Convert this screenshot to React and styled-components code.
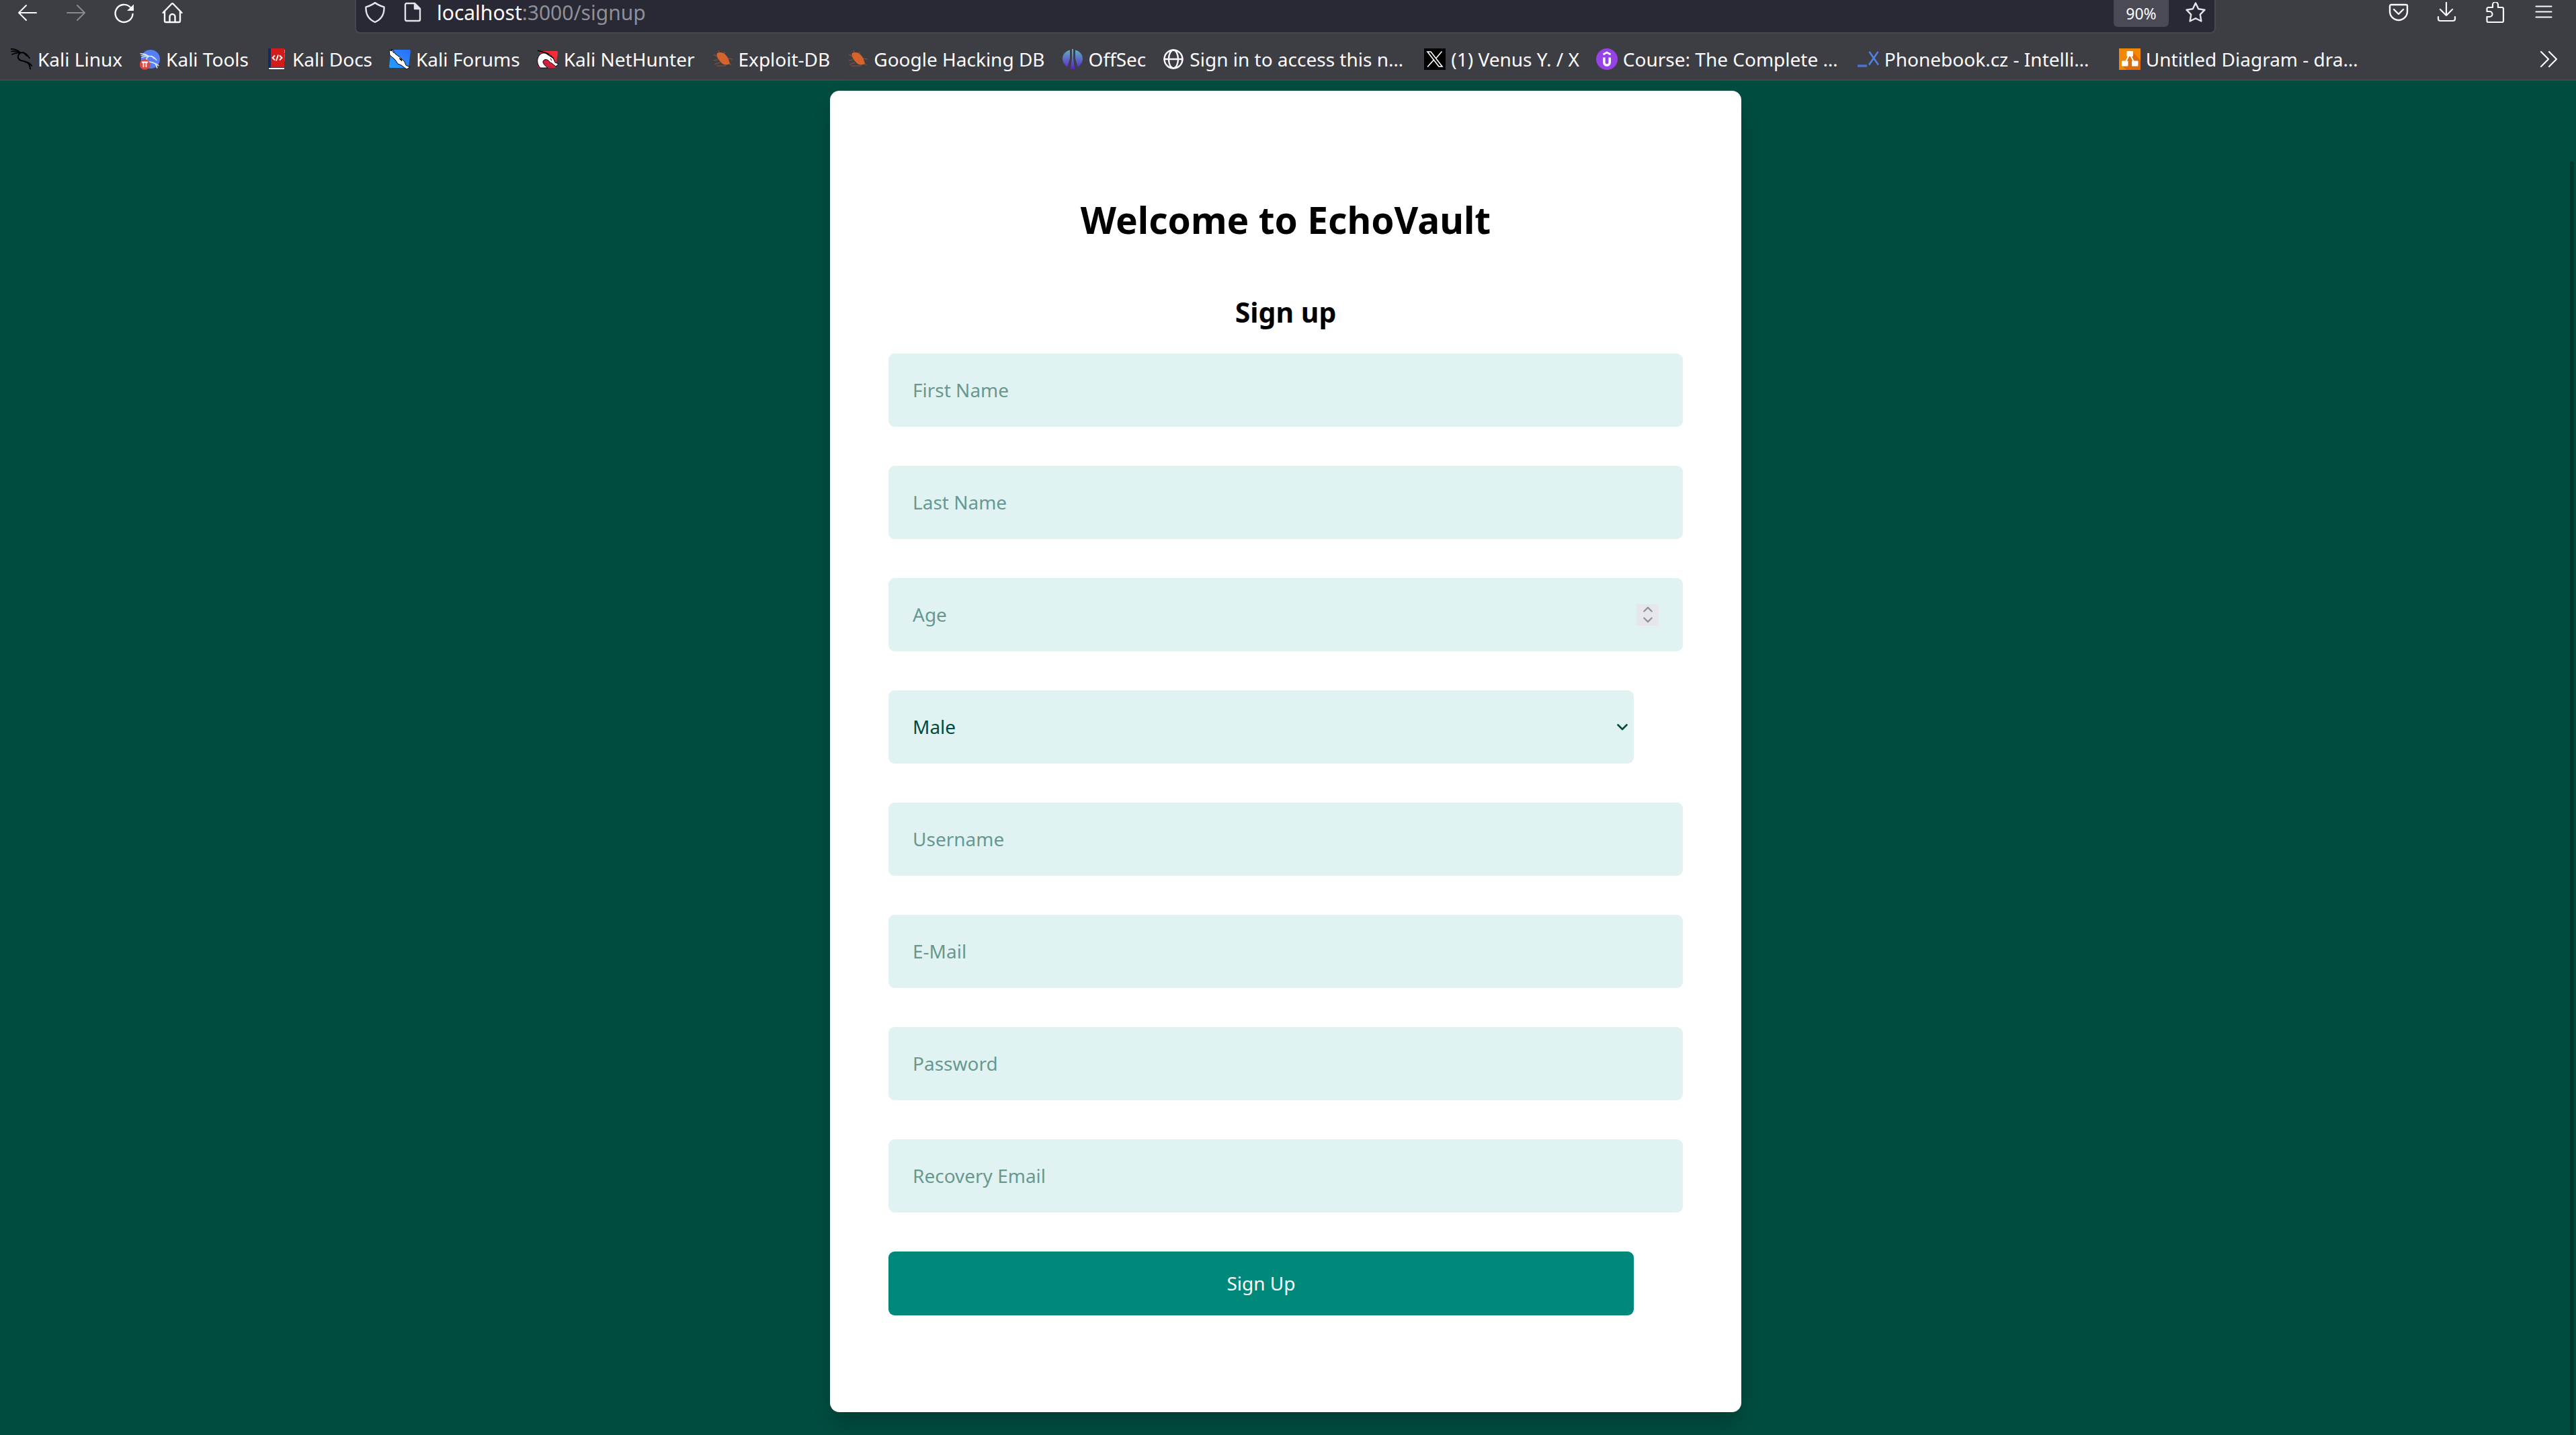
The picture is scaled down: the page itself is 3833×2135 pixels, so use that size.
import React, { useState } from "react";
import styled, { createGlobalStyle } from "styled-components";

const GlobalStyle = createGlobalStyle`
  *, *::before, *::after { box-sizing: border-box; }
  html, body { margin: 0; background: #004d40; }
  body, button, input, select { font-family: "Noto Sans", "Open Sans", sans-serif; }
  button, input, select { margin: 0; padding: 0; border: 0; background: none; color: inherit; }
  svg { display: block; }
`;

const Shell = styled.div`
  display: flex;
  flex-direction: column;
  min-height: 100vh;
`;

const Chrome = styled.header`
  background: #3d3e43;
  color: #fbfbfe;
`;

const NavBar = styled.nav`
  display: flex;
  align-items: flex-start;
  padding: 0 32px 0 24px;
`;

const ToolGroup = styled.div`
  display: flex;
  align-items: center;
  gap: 40px;
  height: 38px;
`;

const ToolButton = styled.button`
  display: block;
  width: 32px;
  height: 32px;
  opacity: ${(p) => (p.disabled ? 0.4 : 1)};
`;

const UrlBar = styled.div`
  flex: 1;
  min-width: 0;
  display: flex;
  align-items: flex-start;
  margin: 0 256px;
  padding: 0 12px;
  height: 50px;
  background: #282934;
  border: 2px solid #47484e;
  border-top: 0;
  border-radius: 0 0 8px 8px;
`;

const UrlIcons = styled.div`
  display: flex;
  align-items: center;
  gap: 24px;
  height: 38px;
`;

const Address = styled.div`
  flex: 1;
  margin-left: 20px;
  font-size: 30px;
  line-height: 38px;
  color: #8f8f98;
`;

const Host = styled.span`
  color: #fbfbfe;
`;

const ZoomLevel = styled.button`
  width: 82px;
  height: 40px;
  margin-right: 24px;
  border-radius: 0 0 6px 6px;
  background: #494a54;
  font-size: 23px;
  line-height: 38px;
  color: #fbfbfe;
`;

const Bookmarks = styled.nav`
  display: flex;
  align-items: center;
  justify-content: space-between;
  height: 70px;
  padding: 8px 28px 0 16px;
  border-bottom: 2px solid #47484e;
`;

const BookmarkList = styled.div`
  display: flex;
  align-items: center;
`;

const Bookmark = styled.a`
  display: flex;
  align-items: center;
  gap: 8px;
  width: ${(p) => (p.$full ? "389px" : "auto")};
  padding-right: ${(p) => (p.$full ? "0" : "25px")};
  color: inherit;
  text-decoration: none;
  white-space: nowrap;
  font-size: 28px;
  line-height: 38px;
`;

const Page = styled.main`
  flex: 1;
  display: flex;
  justify-content: center;
  align-items: flex-start;
  padding: 15px 7px 34px 0;
  position: relative;
`;

const ScrollThumb = styled.div`
  position: absolute;
  top: 120px;
  right: 3px;
  bottom: 0;
  width: 6px;
  border-radius: 3px 3px 0 0;
  background: #00362c;
`;

const Card = styled.form`
  width: 1356px;
  max-width: 100%;
  padding: 154px 87px 144px;
  border-radius: 14px;
  background: #fff;
  box-shadow: 0 18px 36px rgba(0, 0, 0, 0.2);
`;

const Title = styled.h1`
  margin: 0 0 70px;
  font-size: 55px;
  line-height: 76px;
  font-weight: 700;
  text-align: center;
  color: #000;
`;

const Subtitle = styled.h2`
  margin: 0 0 33px;
  font-size: 41px;
  line-height: 58px;
  font-weight: 700;
  text-align: center;
  color: #000;
`;

const Fields = styled.div`
  display: flex;
  flex-direction: column;
  align-items: flex-start;
  gap: 58px;
`;

const Field = styled.label`
  display: flex;
  align-items: center;
  width: ${(p) => (p.$inset ? "calc(100% - 73px)" : "100%")};
  height: 109px;
  padding-right: ${(p) => (p.$inset ? "9px" : "36px")};
  border-radius: 9px;
  background: #e0f2f1;
  color: #004d40;
`;

const TextBox = styled.input`
  flex: 1;
  min-width: 0;
  height: 100%;
  padding: 0 0 2px 36px;
  font-size: 28px;
  outline: 0;
  appearance: textfield;
  &::placeholder { color: #004d40; opacity: 0.54; }
  &::-webkit-inner-spin-button { appearance: none; margin: 0; }
`;

const Picker = styled.select`
  flex: 1;
  height: 100%;
  padding: 0 0 2px 36px;
  font-size: 28px;
  color: #004d40;
  appearance: none;
  outline: 0;
`;

const Stepper = styled.span`
  display: flex;
  flex-direction: column;
  width: 33px;
  height: 32px;
  background: #e7e6eb;
  color: #8f8f9d;
`;

const Step = styled.button`
  flex: 1;
  display: flex;
  justify-content: center;
  align-items: center;
`;

const Submit = styled.button`
  width: calc(100% - 73px);
  height: 95px;
  padding-bottom: 2px;
  border-radius: 9px;
  background: #00897b;
  color: #fff;
  font-size: 28px;
  line-height: 38px;
`;

const Line = ({ children, w = 2, size = 32, ...rest }) => (
  <svg width={size} height={size} viewBox={`0 0 ${size} ${size}`} fill="none" stroke="currentColor"
    strokeWidth={w} strokeLinecap="round" strokeLinejoin="round" aria-hidden="true" {...rest}>
    {children}
  </svg>
);

const Back = () => <Line><path d="M30 16H4M15 5 4 16l11 11" /></Line>;
const Forward = () => <Line><path d="M4 16h26M19 5l11 11-11 11" /></Line>;
const Reload = () => (
  <Line w={2.4}>
    <path d="M29.500 18a13 13 0 1 1-4-10.500" />
    <path d="M31 3.500v9.500H21z" fill="currentColor" stroke="none" />
  </Line>
);
const Home = () => (
  <Line w={2.4}>
    <path d="M2.500 16 15.100 3a2 2 0 0 1 2.800 0L30.500 16" />
    <path d="M5 14v14a2 2 0 0 0 2 2h19a2 2 0 0 0 2-2V14M12.500 30v-8a4 4 0 0 1 8 0v8" />
  </Line>
);
const Shield = () => (
  <Line w={2.4} stroke="#e4e4e8"><path d="M16 1c4 3.500 9 5 13.500 6.500C30 19 24 26.500 16 30 8 26.500 2 19 2.500 7.500 7 6 12 4.500 16 1z" /></Line>
);
const PageIcon = () => (
  <Line w={2.4} stroke="#e4e4e8">
    <path d="M7 2h12l8 8v16a2 2 0 0 1-2 2H7a2 2 0 0 1-2-2V4a2 2 0 0 1 2-2z" />
    <path d="M19 2v8h8z" fill="#e4e4e8" />
  </Line>
);
const Star = () => (
  <Line w={2.4} stroke="#e4e4e8">
    <path d="M16 1.500l4.200 8.800 9.300 1.400-6.700 7 1.600 9.800L16 24.200l-8.400 4.300 1.600-9.800-6.700-7 9.300-1.400z" />
  </Line>
);
const Pocket = () => (
  <Line w={2.4}>
    <path d="M5 4h22a2 2 0 0 1 2 2v8a13 13 0 0 1-26 0V6a2 2 0 0 1 2-2z" />
    <path d="m9 11 7 7 7-7" />
  </Line>
);
const Download = () => (
  <Line w={2.2}>
    <path d="M15 0v20M6 11l9 9 9-9" />
    <path d="M3 22v3a3 3 0 0 0 3 3h19a3 3 0 0 0 3-3v-3" />
  </Line>
);
const Puzzle = () => (
  <Line w={2.2}>
    <path d="M5 8h7V4a4 4 0 0 1 8 0v4h6a2 2 0 0 1 2 2v18a2 2 0 0 1-2 2H5.500a2 2 0 0 1-2-2v-6h4a4 4 0 0 0 0-8h-4v-4a2 2 0 0 1 2-2" />
  </Line>
);
const Menu = () => <Line w={2.2}><path d="M4.500 6.500h23M4.500 14.500h23M4.500 22.500h23" /></Line>;
const More = () => <Line w={2.2}><path d="m8 5 11 11L8 27M20 5l11 11-11 11" /></Line>;

const dragon = (
  <g fill="none" strokeLinecap="round">
    <path d="M0 .8C5 .8 10 2 14 6M1 4.500c5-1 9-.5 13 2M2 9c4-2 8-3 12-2" strokeWidth="1.700" />
    <path d="M13 6.500c5-1 9 .5 12 4l3 4M19 6l5 5" strokeWidth="1.900" />
    <path d="M14 7c-6 5-3 10 3 11.500 7 1.200 11 3 12 12" strokeWidth="2" />
    <path d="M21 20c5 .5 8 2.500 10.500 6" strokeWidth="1.800" />
  </g>
);

const Mark = ({ children }) => (
  <svg width="32" height="32" viewBox="0 0 32 32" aria-hidden="true">{children}</svg>
);

const KaliLinux = () => <Mark><g stroke="#000">{dragon}</g></Mark>;
const KaliTools = () => (
  <Mark>
    <circle cx="17" cy="16" r="14" fill="#5580f5" />
    <g stroke="#dfe8fb" transform="translate(2 7) scale(.85 .72)">{dragon}</g>
    <circle cx="8.500" cy="24" r="7.800" fill="#d9473f" />
    <path d="M3.800 20.500h9.400M6.500 20.500v7.500M10.500 20.500v7.500" stroke="#fff" strokeWidth="1.800" />
  </Mark>
);
const KaliDocs = () => (
  <Mark>
    <path d="M27 2h2v5h-2z" fill="#f28c1e" /><path d="M27 8h2v5h-2z" fill="#19a974" /><path d="M27 13h2v6h-2z" fill="#2a62d8" />
    <path d="M4 0h4v32H4z" fill="#122a5c" />
    <path d="M8 0h20v28H8z" fill="#d51a1a" />
    <path d="M5 29h23v2H5z" fill="#fff" />
    <path d="m14 10.500-3.500 3.500 3.500 3.500M21 10.500l3.500 3.500-3.500 3.500M19 9.500l-3 9" fill="none" stroke="#fff" strokeWidth="1.900" />
  </Mark>
);
const KaliForums = () => (
  <Mark>
    <defs>
      <linearGradient id="forums" x1="0" y1="1" x2="1" y2="0"><stop stopColor="#24a0ff" /><stop offset="1" stopColor="#2b6cff" /></linearGradient>
    </defs>
    <path d="M3 2h27q2 0 2 2l-3 23q0 2-2 2H2q-2 0-2-2z" fill="url(#forums)" />
    <path d="M0 2l3 2 2-3 4 7 8 6 6 6 2 5 6 3-5 3-8-6-5-2L9 17 1 10z" fill="#fff" stroke="#000" strokeWidth="1" />
    <path d="M3 1l4 6M15 15l3 1 1 3z" fill="#000" stroke="#000" strokeWidth="1" />
  </Mark>
);
const KaliNetHunter = () => (
  <Mark>
    <defs>
      <linearGradient id="hunter" x1="0" y1="1" x2="1" y2="0"><stop stopColor="#a5134e" /><stop offset=".5" stopColor="#e0253c" /><stop offset="1" stopColor="#ff3038" /></linearGradient>
    </defs>
    <path d="M5 4h24q2 0 2 2l-3 21q0 2-2 2H3q-2 0-2-2z" fill="url(#hunter)" />
    <path d="M16 29H5C-1 23-1 13 6 8c7-3 13 0 18 6l3 7 5 2-4 4-6-5c-4-1-5-7-11-5-5 3 0 8 5 12z" fill="#fff" stroke="#000" strokeWidth="1" />
    <path d="M1 3l12 4 12 8M8 5l9 3" stroke="#000" strokeWidth="1.500" fill="none" />
    <path d="M20 15l2 3" stroke="#000" strokeWidth="1" />
  </Mark>
);
const Exploit = () => (
  <Mark>
    <g stroke="#8a5238" strokeWidth="1.600" fill="none" opacity=".75">
      <path d="M12 9 10 3M18 9l1-4M8 12l-5-3M24 15l7 1M9 17l-6 1M12 21l-8 3M7 26h14M25 21l4 4" />
    </g>
    <path d="M8 7c5-2 10-1 13 3 4 4 5 9 6 13-4 2-9 2-12-1C11 18 6 12 8 7z" fill="#d5642c" />
  </Mark>
);
const OffSec = () => (
  <Mark>
    <defs>
      <linearGradient id="offsec" gradientUnits="userSpaceOnUse" x1="0" y1="1" x2="0" y2="31"><stop stopColor="#5fb4c4" /><stop offset="1" stopColor="#5a22c8" /></linearGradient>
    </defs>
    <g fill="url(#offsec)">
      <path d="M12 2.500v12L8.500 28C-2.500 21-1.500 6 12 2.500zM20 2.500v12L23.500 28C34.500 21 33.500 6 20 2.500z" />
      <path d="M15 1h2v14l2 16h-6l2-16z" />
    </g>
  </Mark>
);
const Globe = () => (
  <Line w={2.4}><circle cx="16" cy="16" r="13.500" /><ellipse cx="16" cy="16" rx="7" ry="13.500" /><path d="M2.500 16h27" /></Line>
);
const XMark = () => (
  <Mark>
    <path d="M0 0h32v32H0z" fill="#000" />
    <path d="M5 5h5l17 22h-5zM26.500 4.500 17.500 15M5 27.500l10-11" fill="none" stroke="#fff" strokeWidth="1.600" />
  </Mark>
);
const Udemy = () => (
  <Mark>
    <circle cx="16" cy="16" r="16" fill="#9742e6" />
    <path d="m10.500 9 5.500-3 5.500 3" fill="none" stroke="#fff" strokeWidth="2.800" />
    <path d="M11.800 13.500v7c0 6 8.400 6 8.400 0v-7" fill="none" stroke="#fff" strokeWidth="3.600" />
  </Mark>
);
const Phonebook = () => (
  <Mark>
    <path d="M0 26h14" stroke="#4c73cf" strokeWidth="3.500" />
    <path d="M17.500 5 31 24.500M30.500 5 17 24.500" stroke="#5080e6" strokeWidth="2.600" />
  </Mark>
);
const Diagram = () => (
  <Mark>
    <path d="M0 0h32v32H0z" fill="#f08705" />
    <path d="M20 5l12 13v14H11l-6-6 9-14z" fill="#df6c0c" />
    <path d="M16 8 9 22M16 8l7 14" stroke="#fff" strokeWidth="2" />
    <g fill="#fff"><rect x="11.500" y="4" width="9.500" height="8" rx="1" /><rect x="4" y="18.500" width="9.500" height="8" rx="1" /><rect x="19" y="18.500" width="9.500" height="8" rx="1" /></g>
  </Mark>
);

const Chevron = ({ up, w, h }) => (
  <svg width={w} height={h} viewBox="0 0 16 10" fill="none" stroke="currentColor" strokeWidth="2.600"
    strokeLinecap="round" strokeLinejoin="round" aria-hidden="true">
    <path d={up ? "M1.500 8.500 8 2l6.500 6.500" : "M1.500 1.500 8 8l6.500-6.500"} />
  </svg>
);

const bookmarks = [
  ["Kali Linux", KaliLinux],
  ["Kali Tools", KaliTools],
  ["Kali Docs", KaliDocs],
  ["Kali Forums", KaliForums],
  ["Kali NetHunter", KaliNetHunter],
  ["Exploit-DB", Exploit],
  ["Google Hacking DB", Exploit],
  ["OffSec", OffSec],
  ["Sign in to access this n…", Globe, true],
  ["(1) Venus Y. / X", XMark],
  ["Course: The Complete …", Udemy, true],
  ["Phonebook.cz - Intelli…", Phonebook, true],
  ["Untitled Diagram - dra…", Diagram, true],
];

const TextField = ({ label, type = "text" }) => (
  <Field>
    <TextBox type={type} placeholder={label} aria-label={label} />
  </Field>
);

function AgeField() {
  const [age, setAge] = useState("");
  const step = (by) => setAge((v) => String(Math.max(0, Number(v) + by)));
  return (
    <Field>
      <TextBox type="number" placeholder="Age" aria-label="Age" value={age} onChange={(e) => setAge(e.target.value)} />
      <Stepper>
        <Step type="button" aria-label="Increase age" onClick={() => step(1)}><Chevron up w="14" h="9" /></Step>
        <Step type="button" aria-label="Decrease age" onClick={() => step(-1)}><Chevron w="14" h="9" /></Step>
      </Stepper>
    </Field>
  );
}

export default function App() {
  return (
    <Shell>
      <GlobalStyle />
      <Chrome>
        <NavBar aria-label="Browser toolbar">
          <ToolGroup>
            <ToolButton aria-label="Back"><Back /></ToolButton>
            <ToolButton aria-label="Forward" disabled><Forward /></ToolButton>
            <ToolButton aria-label="Reload"><Reload /></ToolButton>
            <ToolButton aria-label="Home"><Home /></ToolButton>
          </ToolGroup>
          <UrlBar>
            <UrlIcons><Shield /><PageIcon /></UrlIcons>
            <Address><Host>localhost</Host>:3000/signup</Address>
            <ZoomLevel>90%</ZoomLevel>
            <UrlIcons><ToolButton aria-label="Bookmark this page"><Star /></ToolButton></UrlIcons>
          </UrlBar>
          <ToolGroup>
            <ToolButton aria-label="Save to Pocket"><Pocket /></ToolButton>
            <ToolButton aria-label="Downloads"><Download /></ToolButton>
            <ToolButton aria-label="Extensions"><Puzzle /></ToolButton>
            <ToolButton aria-label="Menu"><Menu /></ToolButton>
          </ToolGroup>
        </NavBar>
        <Bookmarks aria-label="Bookmarks">
          <BookmarkList>
            {bookmarks.map(([name, Icon, full]) => (
              <Bookmark key={name} href="#" $full={full}><Icon />{name}</Bookmark>
            ))}
          </BookmarkList>
          <ToolButton aria-label="More bookmarks"><More /></ToolButton>
        </Bookmarks>
      </Chrome>
      <Page>
        <Card onSubmit={(e) => e.preventDefault()}>
          <Title>Welcome to EchoVault</Title>
          <Subtitle>Sign up</Subtitle>
          <Fields>
            <TextField label="First Name" />
            <TextField label="Last Name" />
            <AgeField />
            <Field $inset>
              <Picker aria-label="Gender" defaultValue="Male">
                <option>Male</option>
                <option>Female</option>
                <option>Other</option>
              </Picker>
              <Chevron w="16" h="10" />
            </Field>
            <TextField label="Username" />
            <TextField label="E-Mail" type="email" />
            <TextField label="Password" type="password" />
            <TextField label="Recovery Email" type="email" />
            <Submit type="submit">Sign Up</Submit>
          </Fields>
        </Card>
        <ScrollThumb />
      </Page>
    </Shell>
  );
}
